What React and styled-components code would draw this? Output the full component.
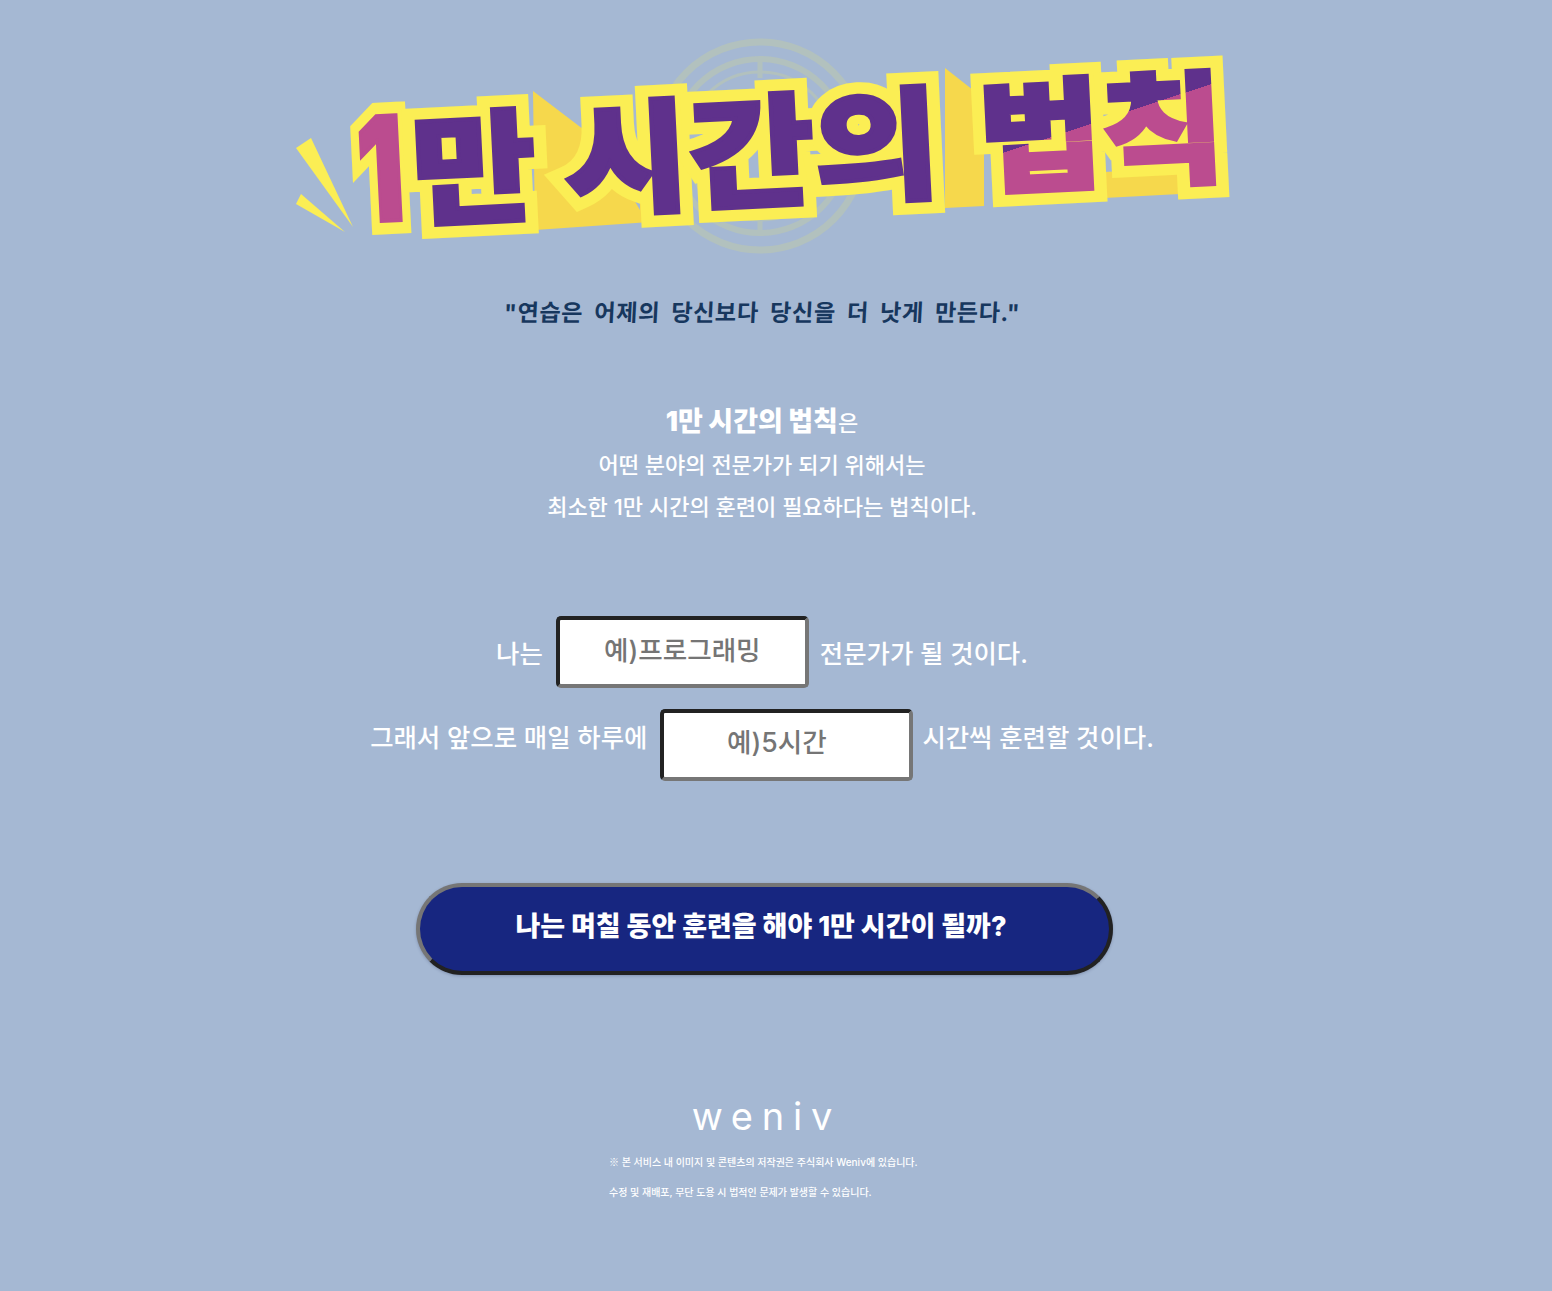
import React from 'react'
import styled, { createGlobalStyle } from 'styled-components'

const GlobalStyle = createGlobalStyle`
  html, body {
    margin: 0;
    padding: 0;
    background: #a5b8d3;
  }
  body {
    font-family: Inter, "Noto Sans CJK KR", sans-serif;
  }
`

const Page = styled.main`
  width: 1524px;
  height: 1291px;
  padding-top: 30px;
  box-sizing: border-box;
  display: flex;
  flex-direction: column;
  align-items: center;
  color: #fff;
  overflow: hidden;
`

const Hero = styled.svg`
  width: 960px;
  height: 230px;
  display: block;
  flex: none;
`

const Word = styled.text`
  font-family: ${p => (p.$digit ? 'Inter' : '"Noto Sans CJK KR"')}, sans-serif;
  font-weight: 900;
  font-size: ${p => (p.$digit ? 144 : 122)}px;
  stroke-linejoin: miter;
  stroke-miterlimit: 8;
`

const Quote = styled.p`
  margin: 34px 0 0;
  font-size: 23.2px;
  line-height: 38px;
  font-weight: 700;
  letter-spacing: 0.6px;
  word-spacing: 5px;
  color: #17375e;
  transform: skewX(-3deg);
  white-space: nowrap;
`

const Intro = styled.section`
  margin-top: 70px;
  text-align: center;
  font-size: 22px;
  line-height: 42px;
  font-weight: 500;
`

const IntroLine = styled.p`
  margin: 0;
`

const Strong = styled.strong`
  font-size: 27px;
  line-height: 1;
  font-weight: 900;
`

const Form = styled.form`
  margin-top: 88px;
  display: flex;
  flex-direction: column;
  align-items: center;
  gap: 21px;
`

const Row = styled.div`
  display: flex;
  align-items: center;
`

const Label = styled.span`
  font-size: 25.4px;
  line-height: 38px;
  font-weight: 500;
  white-space: nowrap;
  margin: ${p => p.$drop || 0}px 0 ${p => p.$lift || 0}px;
`

const Field = styled.input`
  width: 253px;
  height: 72px;
  box-sizing: border-box;
  margin: 0 ${p => p.$right}px 0 13px;
  padding: 0 ${p => p.$pad || 0}px ${p => p.$bottom}px 0;
  background: #fff;
  border: 4px solid;
  border-color: #222 #767676 #767676 #222;
  border-radius: 5px;
  outline: none;
  text-align: center;
  font-family: Inter, "Noto Sans CJK KR", sans-serif;
  font-size: 26.6px;
  font-weight: 500;
  &::placeholder {
    color: #757575;
    opacity: 1;
  }
`

const Submit = styled.button`
  margin-top: 102px;
  margin-left: 4px;
  width: 697px;
  height: 92px;
  box-sizing: border-box;
  padding: 0 6px 10px 0;
  background: #172680;
  border: 4px solid;
  border-color: #767676 #222 #222 #767676;
  border-radius: 46px;
  color: #fff;
  font-family: Inter, "Noto Sans CJK KR", sans-serif;
  font-size: 27px;
  font-weight: 800;
  box-shadow: 0 1px 3px rgba(30, 40, 80, 0.25);
`

const Footer = styled.footer`
  margin-top: 121px;
  width: 320px;
  display: flex;
  flex-direction: column;
  align-items: center;
`

const Logo = styled.div`
  font-family: Inter, sans-serif;
  font-weight: 400;
  font-size: 38px;
  line-height: 40px;
  letter-spacing: 8.75px;
  margin-right: -8.75px;
`

const Legal = styled.p`
  align-self: flex-start;
  margin: ${p => p.$top}px 0 0 7px;
  font-size: 10px;
  line-height: 15px;
  font-weight: 500;
  white-space: nowrap;
`

const NoteMark = styled.span`
  font-family: "Noto Sans CJK KR", sans-serif;
  font-size: 10px;
  font-weight: 700;
`

const YELLOW = '#fbee54'
const AMBER = '#f6d84c'
const PURPLE = '#5f318c'
const PINK = '#bb4c8f'

const words = [
  { text: '1', x: 360, y: 222, len: 46, fill: PINK, digit: true },
  { text: '만', x: 414, y: 216, len: 124, fill: PURPLE },
  { text: '시간의', x: 566, y: 206, len: 376, fill: PURPLE },
  { text: '법칙', x: 981, y: 184, len: 246, fill: 'url(#ruleFill)' },
]

const Dial = () => (
  <g fill="none" stroke="#b2c1be">
    <circle cx="760" cy="146" r="104" strokeWidth="7" />
    <circle cx="760" cy="146" r="87" strokeWidth="6" />
    <circle cx="760" cy="146" r="74" strokeWidth="3" />
    <path d="M760 58V78M760 214V234" strokeWidth="5" />
  </g>
)

const Sparks = () => (
  <g fill={YELLOW}>
    <polygon points="296,148 311,138 353,227" />
    <polygon points="296,204 301,194 345,232" />
  </g>
)

const Shade = () => (
  <g fill={AMBER}>
    <polygon points="533,91 600,142 640,210 650,222 535,230" />
    <polygon points="640,88 655,100 655,222 640,222" />
    <polygon points="945,68 973,90 984,146 984,206 945,208" />
    <polygon points="1104,172 1180,168 1180,194 1104,198" />
  </g>
)

const place = w => `translate(${w.x} ${w.y}) rotate(-2.8)`

const HeroArt = () => (
  <Hero viewBox="282 30 960 230" role="img" aria-label="1만 시간의 법칙">
    <defs>
      <linearGradient id="ruleFill" gradientUnits="userSpaceOnUse" x1="112" y1="-103" x2="137" y2="-13">
        <stop offset="0.5" stopColor={PURPLE} />
        <stop offset="0.5" stopColor={PINK} />
      </linearGradient>
    </defs>
    <Dial />
    <Shade />
    <Sparks />
    {words.map(w => (
      <Word key={w.text} $digit={w.digit} textLength={w.len} lengthAdjust="spacingAndGlyphs" transform={place(w)} fill={YELLOW} stroke={YELLOW} strokeWidth="27">{w.text}</Word>
    ))}
    {words.map(w => (
      <Word key={w.text} $digit={w.digit} textLength={w.len} lengthAdjust="spacingAndGlyphs" transform={place(w)} fill={w.fill} stroke={w.fill} strokeWidth="4">{w.text}</Word>
    ))}
  </Hero>
)

export default function App() {
  return (
    <Page>
      <GlobalStyle />
      <HeroArt />
      <Quote>"연습은 어제의 당신보다 당신을 더 낫게 만든다."</Quote>
      <Intro>
        <IntroLine><Strong>1만 시간의 법칙</Strong>은</IntroLine>
        <IntroLine>어떤 분야의 전문가가 되기 위해서는</IntroLine>
        <IntroLine>최소한 1만 시간의 훈련이 필요하다는 법칙이다.</IntroLine>
      </Intro>
      <Form>
        <Row>
          <Label $drop={4}>나는</Label>
          <Field placeholder="예)프로그래밍" $right={11} $bottom={4} />
          <Label $drop={4}>전문가가 될 것이다.</Label>
        </Row>
        <Row>
          <Label $lift={14}>그래서 앞으로 매일 하루에</Label>
          <Field placeholder="예)5시간" $right={9} $pad={20} $bottom={6} />
          <Label $lift={14}>시간씩 훈련할 것이다.</Label>
        </Row>
      </Form>
      <Submit type="button">나는 며칠 동안 훈련을 해야 1만 시간이 될까?</Submit>
      <Footer>
        <Logo>weniv</Logo>
        <Legal $top={18}><NoteMark>※</NoteMark> 본 서비스 내 이미지 및 콘텐츠의 저작권은 주식회사 Weniv에 있습니다.</Legal>
        <Legal $top={15}>수정 및 재배포, 무단 도용 시 법적인 문제가 발생할 수 있습니다.</Legal>
      </Footer>
    </Page>
  )
}
